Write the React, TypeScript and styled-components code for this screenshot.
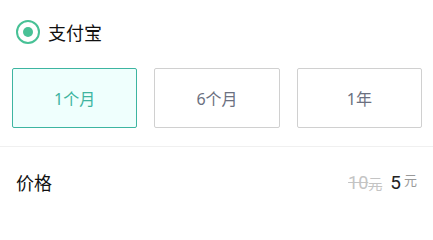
import React, { useState } from "react";
import styled, { createGlobalStyle } from "styled-components";

const GlobalStyle = createGlobalStyle`
  body {
    margin: 0;
    background: #fff;
    font-family: "Noto Sans", "Noto Sans CJK SC", sans-serif;
  }
`;

const plans = [
  { key: "1m", label: "1个月" },
  { key: "6m", label: "6个月" },
  { key: "1y", label: "1年" },
];

function App() {
  const [active, setActive] = useState("1m");
  return (
    <StyledWrapper>
      <GlobalStyle />
      <StyledMethod>
        <StyledRadio>
          <span />
        </StyledRadio>
        支付宝
      </StyledMethod>
      <StyledPlans>
        {plans.map((plan) => (
          <StyledPlan
            key={plan.key}
            $active={active === plan.key}
            onClick={() => setActive(plan.key)}
          >
            {plan.label}
          </StyledPlan>
        ))}
      </StyledPlans>
      <StyledDivider />
      <StyledPriceRow>
        <span>价格</span>
        <StyledPrice>
          <StyledOld>
            10<small>元</small>
          </StyledOld>
          <StyledNow>5</StyledNow>
          <StyledUnit>元</StyledUnit>
        </StyledPrice>
      </StyledPriceRow>
    </StyledWrapper>
  );
}

export default App;

const StyledWrapper = styled.div`
  width: 433px;
  color: #111;
`;

const StyledMethod = styled.div`
  display: flex;
  align-items: center;
  gap: 8px;
  height: 26px;
  padding: 19px 16px 0;
  font-size: 18px;
`;

const StyledRadio = styled.div`
  width: 20px;
  height: 20px;
  border: 2.5px solid #48c196;
  border-radius: 50%;
  display: flex;
  align-items: center;
  justify-content: center;
  & > span {
    width: 10px;
    height: 10px;
    border-radius: 50%;
    background: #48c196;
  }
`;

const StyledPlans = styled.div`
  display: grid;
  grid-template-columns: repeat(3, 1fr);
  gap: 17px;
  padding: 23px 11px 0 12px;
`;

const StyledPlan = styled.div<{ $active: boolean }>`
  height: 60px;
  box-sizing: border-box;
  border: 1px solid ${(p) => (p.$active ? "#3db5a1" : "#d0d0d0")};
  border-radius: 2px;
  background: ${(p) => (p.$active ? "#effffd" : "#fff")};
  color: ${(p) => (p.$active ? "#3eb4a0" : "#6b7080")};
  display: flex;
  align-items: center;
  justify-content: center;
  font-size: 16px;
  cursor: pointer;
`;

const StyledDivider = styled.div`
  height: 1px;
  background: #f0f0f0;
  margin-top: 18px;
`;

const StyledPriceRow = styled.div`
  display: flex;
  align-items: center;
  justify-content: space-between;
  height: 70px;
  padding: 0 16px 0 16px;
  font-size: 18px;
`;

const StyledPrice = styled.div`
  display: flex;
  align-items: baseline;
  font-family: Roboto, "Noto Sans CJK SC", sans-serif;
`;

const StyledOld = styled.span`
  color: #c4c4c4;
  font-size: 18px;
  text-decoration: line-through;
  margin-right: 8px;
  & > small {
    font-size: 14px;
  }
`;

const StyledNow = styled.span`
  font-size: 19px;
  color: #222;
`;

const StyledUnit = styled.span`
  font-size: 13px;
  color: #999;
  align-self: flex-start;
  margin-left: 3px;
  margin-top: -1px;
`;
